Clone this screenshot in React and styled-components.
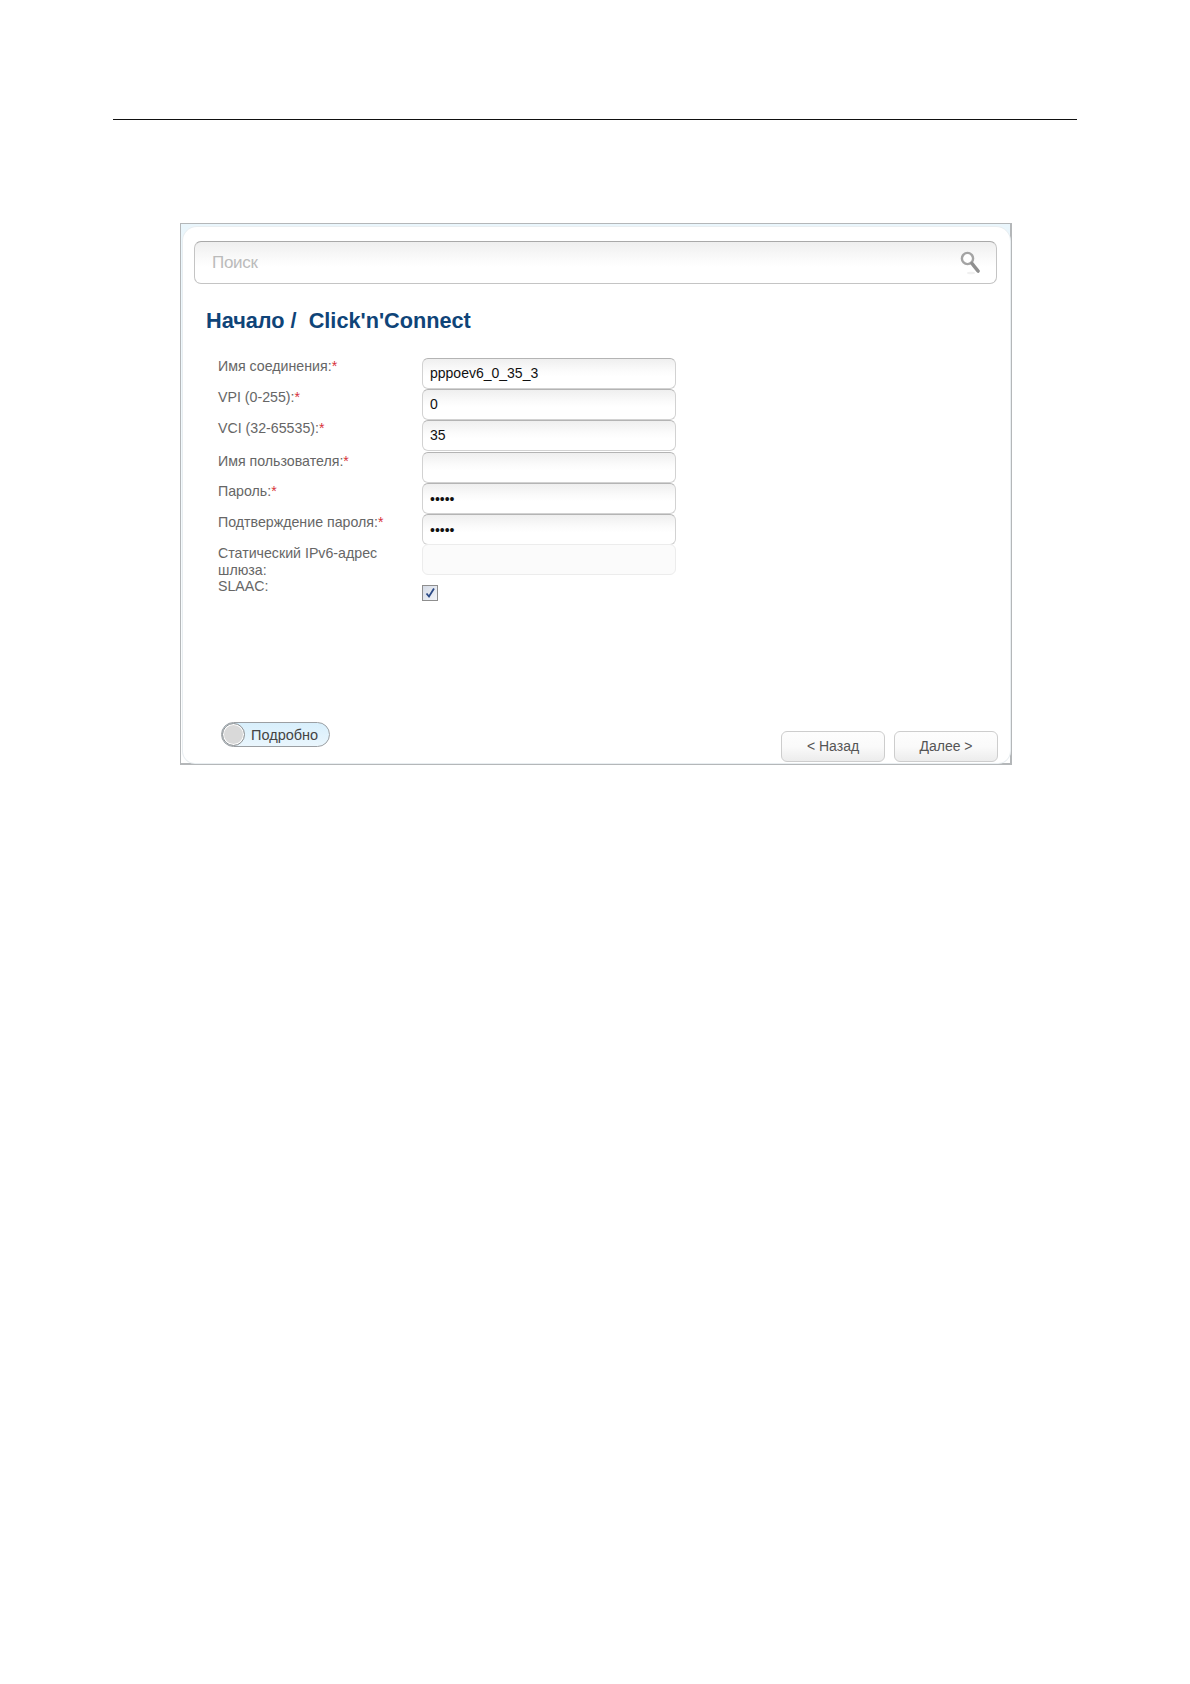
import React from "react";
import styled, { createGlobalStyle } from "styled-components";

const Global = createGlobalStyle`
  html, body { margin: 0; padding: 0; background: #fff; }
  body { font-family: "Liberation Sans", Arial, sans-serif; }
`;
const Page = styled.div`
  height: 1684px; padding: 119px 113px 0; box-sizing: border-box; overflow: hidden;
`;
const Rule = styled.div`
  height: 1px; background: #111; margin-bottom: 103px;
`;
const Frame = styled.div`
  width: 832px; height: 542px; margin-left: 67px; box-sizing: border-box;
  border: 1px solid #b4b7b9; padding: 3px 0 0 2px;
  border-right-width: 2px; border-bottom-width: 2px;
  background: linear-gradient(#eaf6fc, #f4fafd 60%, #fff);
  display: flex;
`;
const Panel = styled.div`
  flex: 1; display: flex; flex-direction: column; box-sizing: border-box;
  background: #fff; border-radius: 14px 14px 12px 12px; padding: 14px 13px 1px 11px;
  box-shadow: 0 0 0 1px #e9eef1;
`;
const SearchBar = styled.div`
  height: 43px; box-sizing: border-box; border: 1px solid #c4c4c4; border-top-color: #a9a9a9; border-radius: 7px;
  background: linear-gradient(#efefef, #fafafa 40%, #fff 60%);
  display: flex; align-items: center; justify-content: space-between;
  padding: 0 16px 0 17px; color: #bbb; font-size: 17px; letter-spacing: -.3px;
`;
const Title = styled.h1`
  margin: 23px 0 23px 12px; font-size: 21.7px; line-height: 28px; font-weight: 700;
  color: #0f4478; white-space: pre;
`;
const Form = styled.div`
  display: flex; flex-direction: column; padding-left: 24px;
`;
const Row = styled.div`
  display: flex; align-items: flex-start; height: ${p => p.$h}px;
`;
const Label = styled.div`
  width: 204px; flex: none; box-sizing: border-box; padding-right: 30px; padding-top: ${p => p.$pt || 0}px;
  font-size: 14.2px; line-height: 17px; color: #666;
`;
const Star = styled.span`color: #d8323a;`;
const Field = styled.input`
  width: 254px; height: 31px; box-sizing: border-box; margin: 0; outline: none;
  border: 1px solid ${p => p.disabled ? "#ececec" : "#d2d2d2"};
  border-top-color: ${p => p.disabled ? "#ececec" : "#b4b4b4"};
  border-radius: 6px; padding: 0 7px 1px;
  background: ${p => p.disabled ? "#fbfbfb" : "linear-gradient(#efefef, #fbfbfb 40%, #fff 60%)"};
  font: 14px "Liberation Sans", Arial, sans-serif; color: #111;
  &[type="password"] { padding: 1px 7px 0; }
`;
const Check = styled.div`
  width: 16px; height: 16px; box-sizing: border-box; margin-top: 8px;
  border: 1px solid #8e8e8e; background: linear-gradient(135deg, #d5dbe6, #f3f5f9);
  display: flex; align-items: center; justify-content: center;
`;
const Footer = styled.div`
  margin-top: auto; margin-right: -1px; display: flex; justify-content: space-between; align-items: flex-start;
  padding-left: 27px;
`;
const Toggle = styled.div`
  width: 109px; height: 25px; box-sizing: border-box; border: 1px solid #9b9fa3; border-radius: 13px;
  background: linear-gradient(#d8effc, #eaf6fd); display: flex; align-items: center; gap: 6px;
  font-size: 14.5px; color: #444; margin-bottom: 15px;
`;
const Knob = styled.div`
  width: 23px; height: 23px; box-sizing: border-box; border-radius: 50%;
  background: #d9d9d9; border: 1px solid #8f9396; box-shadow: 0 0 0 1px #fff inset;
`;
const Buttons = styled.div`
  display: flex; gap: 9px; padding-top: 9px;
`;
const Button = styled.div`
  width: 104px; height: 31px; box-sizing: border-box; border: 1px solid #cdcdcd; border-radius: 6px;
  background: linear-gradient(#fdfdfd, #fafafa 50%, #ececec);
  display: flex; align-items: center; justify-content: center; padding-bottom: 2px;
  font-size: 14px; color: #555;
`;

const rows = [
  { label: "Имя соединения:", req: true, value: "pppoev6_0_35_3", h: 31 },
  { label: "VPI (0-255):", req: true, value: "0", h: 31 },
  { label: "VCI (32-65535):", req: true, value: "35", h: 32 },
  { label: "Имя пользователя:", req: true, value: "", h: 31, pt: 1 },
  { label: "Пароль:", req: true, value: "admin", type: "password", h: 31 },
  { label: "Подтверждение пароля:", req: true, value: "admin", type: "password", h: 30 },
  { label: "Статический IPv6-адрес шлюза:", value: "", disabled: true, h: 33, pt: 1 },
];

export default function App() {
  return (
    <Page>
      <Global />
      <Rule />
      <Frame>
        <Panel>
          <SearchBar>
            Поиск
            <svg width="20" height="24" viewBox="0 0 20 24">
              <ellipse cx="11" cy="22" rx="4" ry="1.3" fill="#f0f0f0" />
              <circle cx="7.5" cy="7.5" r="5.6" fill="#fff" stroke="#a4a4a4" strokeWidth="2.4" />
              <path d="M12 12.5 L18 20" stroke="#8f8f8f" strokeWidth="3.6" strokeLinecap="round" />
            </svg>
          </SearchBar>
          <Title>{"Начало /  Click'n'Connect"}</Title>
          <Form>
            {rows.map(r => (
              <Row key={r.label} $h={r.h}>
                <Label $pt={r.pt}>{r.label}{r.req && <Star>*</Star>}</Label>
                <Field type={r.type || "text"} defaultValue={r.value} disabled={r.disabled} readOnly />
              </Row>
            ))}
            <Row $h={25}>
              <Label $pt={1}>SLAAC:</Label>
              <Check>
                <svg width="12" height="12" viewBox="0 0 12 12">
                  <path d="M2.5 6.5 L5 9.5 L10 1.5" fill="none" stroke="#2b4a86" strokeWidth="1.8" />
                </svg>
              </Check>
            </Row>
          </Form>
          <Footer>
            <Toggle><Knob />Подробно</Toggle>
            <Buttons>
              <Button>{"< Назад"}</Button>
              <Button>{"Далее >"}</Button>
            </Buttons>
          </Footer>
        </Panel>
      </Frame>
    </Page>
  );
}
